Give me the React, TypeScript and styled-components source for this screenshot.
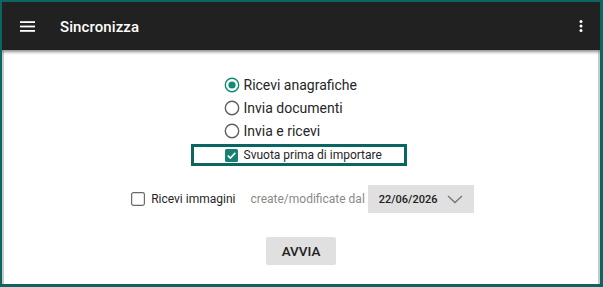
import React from "react"
import styled, { createGlobalStyle } from "styled-components"

const GlobalStyle = createGlobalStyle`
    html, body {
        margin: 0;
        padding: 0;
        background: #ffffff;
    }
    * {
        box-sizing: border-box;
    }
`

const Frame = styled.div`
    width: 603px;
    height: 287px;
    display: flex;
    flex-direction: column;
    border: 2px solid #0b6662;
    border-right-width: 3px;
    border-bottom-width: 3px;
    font-family: Roboto, "Liberation Sans", sans-serif;
    overflow: hidden;
`

const Toolbar = styled.header`
    position: relative;
    z-index: 2;
    height: 48px;
    flex: none;
    display: flex;
    align-items: center;
    padding: 0 10px 0 18px;
    background-color: #212121;
    color: #ffffff;
    box-shadow: 0 2px 3px rgba(0, 0, 0, 0.45);
`

const IconButton = styled.button`
    display: flex;
    align-items: center;
    justify-content: center;
    padding: 0;
    border: none;
    background: none;
    color: #ffffff;
    cursor: pointer;
`

const Title = styled.h1`
    flex: 1;
    margin: 0 0 0 25px;
    font-size: 15px;
    font-weight: 500;
    line-height: 1;
    padding-top: 2px;
    letter-spacing: 0.1px;
`

const Content = styled.main`
    flex: 1;
    display: flex;
    flex-direction: column;
    align-items: center;
    padding-top: 23px;
    background: #ffffff;
    border-left: 2px solid #c9c9c9;
    border-right: 2px solid #c9c9c9;
`

const Options = styled.div`
    width: 216px;
    margin-right: 5px;
    display: flex;
    flex-direction: column;
`

const OptionRow = styled.label<{ $framed?: boolean }>`
    height: ${({ $framed }) => ($framed ? "22px" : "23px")};
    display: flex;
    align-items: center;
    gap: ${({ $framed }) => ($framed ? "6px" : "4px")};
    padding-left: ${({ $framed }) => ($framed ? "31px" : "33px")};
    margin-top: ${({ $framed }) => ($framed ? "2px" : "0")};
    border: ${({ $framed }) => ($framed ? "3px solid #0b6662" : "none")};
    color: #262626;
    font-size: ${({ $framed }) => ($framed ? "12px" : "14px")};
    cursor: pointer;
`

const FilterRow = styled.div`
    display: flex;
    align-items: center;
    margin-top: 19px;
    margin-left: 3px;
    font-size: 12px;
`

const CheckLabel = styled.label`
    display: flex;
    align-items: center;
    gap: 6px;
    color: #262626;
    cursor: pointer;
`

const Hint = styled.span`
    margin-left: 15px;
    color: #8a8a8a;
`

const DateSelect = styled.div`
    margin-left: 3px;
    width: 106px;
    height: 28px;
    display: flex;
    align-items: center;
    justify-content: space-between;
    padding: 0 11px 0 11px;
    background-color: #e0e0e0;
    color: #212121;
    font-size: 11px;
    font-weight: 500;
`

const StartButton = styled.button`
    margin-top: 24px;
    width: 70px;
    height: 28px;
    border: none;
    border-radius: 2px;
    background-color: #e0e0e0;
    color: #212121;
    font-family: Roboto, "Liberation Sans", sans-serif;
    font-size: 13.5px;
    font-weight: 500;
    cursor: pointer;
`

const Radio: React.FC<{ checked?: boolean }> = ({ checked }) => (
    <svg width="16" height="16" viewBox="0 0 16 16">
        <circle cx="8" cy="8" r="6.7" fill="none" stroke={checked ? "#138a76" : "#5f5f5f"} strokeWidth="1.4" />
        {checked && <circle cx="8" cy="8" r="3.6" fill="#138a76" />}
    </svg>
)

const Checkbox: React.FC<{ checked?: boolean }> = ({ checked }) =>
    checked ? (
        <svg width="13" height="13" viewBox="0 0 13 13">
            <rect x="0" y="0" width="13" height="13" rx="1.5" fill="#168072" />
            <path d="M2.8 6.6 L5.3 9 L10.3 3.9" fill="none" stroke="#ffffff" strokeWidth="1.6" />
        </svg>
    ) : (
        <svg width="14" height="14" viewBox="0 0 14 14">
            <rect x="0.6" y="0.6" width="12.8" height="12.8" rx="1.8" fill="none" stroke="#6a6a6a" strokeWidth="1.2" />
        </svg>
    )

const MenuIcon = () => (
    <svg width="15" height="11" viewBox="0 0 15 11">
        <rect x="0" y="0.2" width="15" height="1.8" fill="#ffffff" />
        <rect x="0" y="4.6" width="15" height="1.8" fill="#ffffff" />
        <rect x="0" y="9" width="15" height="1.8" fill="#ffffff" />
    </svg>
)

const MoreIcon = () => (
    <svg width="18" height="18" viewBox="0 0 24 24">
        <circle cx="12" cy="6" r="2" fill="#ffffff" />
        <circle cx="12" cy="12" r="2" fill="#ffffff" />
        <circle cx="12" cy="18" r="2" fill="#ffffff" />
    </svg>
)

const Chevron = () => (
    <svg width="16" height="9" viewBox="0 0 16 9">
        <path d="M1 1 L8 7.5 L15 1" fill="none" stroke="#757575" strokeWidth="1.3" />
    </svg>
)

const options = ["Ricevi anagrafiche", "Invia documenti", "Invia e ricevi"]

export default function App() {
    return (
        <>
            <GlobalStyle />
            <Frame>
                <Toolbar>
                    <IconButton aria-label="menu">
                        <MenuIcon />
                    </IconButton>
                    <Title>Sincronizza</Title>
                    <IconButton aria-label="altro">
                        <MoreIcon />
                    </IconButton>
                </Toolbar>
                <Content>
                    <Options>
                        {options.map((o, i) => (
                            <OptionRow key={o}>
                                <Radio checked={i === 0} />
                                {o}
                            </OptionRow>
                        ))}
                        <OptionRow $framed>
                            <Checkbox checked />
                            Svuota prima di importare
                        </OptionRow>
                    </Options>
                    <FilterRow>
                        <CheckLabel>
                            <Checkbox />
                            Ricevi immagini
                        </CheckLabel>
                        <Hint>create/modificate dal</Hint>
                        <DateSelect>
                            22/06/2026
                            <Chevron />
                        </DateSelect>
                    </FilterRow>
                    <StartButton>AVVIA</StartButton>
                </Content>
            </Frame>
        </>
    )
}
